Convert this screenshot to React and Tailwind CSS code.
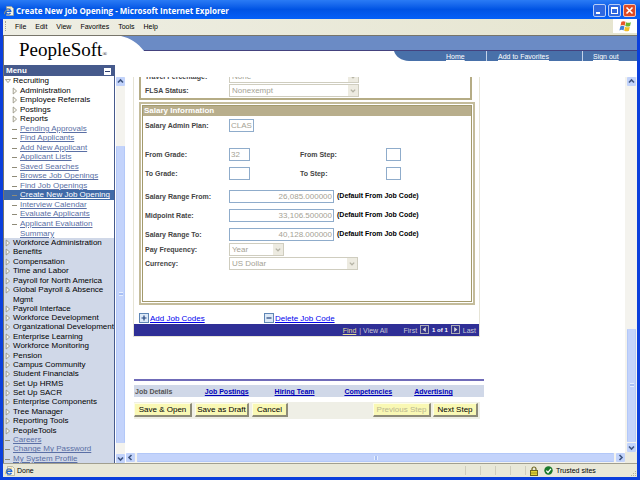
import { useState } from "react";

const recruitingFolders = ["Administration", "Employee Referrals", "Postings", "Reports"];

const recruitingLinks = [
  "Pending Approvals",
  "Find Applicants",
  "Add New Applicant",
  "Applicant Lists",
  "Saved Searches",
  "Browse Job Openings",
  "Find Job Openings",
  "Create New Job Opening",
  "Interview Calendar",
  "Evaluate Applicants",
  "Applicant Evaluation Summary",
];

const modules = [
  "Workforce Administration",
  "Benefits",
  "Compensation",
  "Time and Labor",
  "Payroll for North America",
  "Global Payroll & Absence Mgmt",
  "Payroll Interface",
  "Workforce Development",
  "Organizational Development",
  "Enterprise Learning",
  "Workforce Monitoring",
  "Pension",
  "Campus Community",
  "Student Financials",
  "Set Up HRMS",
  "Set Up SACR",
  "Enterprise Components",
  "Tree Manager",
  "Reporting Tools",
  "PeopleTools",
];

const accountLinks = ["Careers", "Change My Password", "My System Profile"];

const twoLine = ["Applicant Evaluation Summary", "Global Payroll & Absence Mgmt"];

const Chevron = ({ dir }) => {
  const paths = {
    up: "M2 5.5 L4.5 3 L7 5.5",
    down: "M2 3.5 L4.5 6 L7 3.5",
    left: "M5.5 2 L3 4.5 L5.5 7",
    right: "M3.5 2 L6 4.5 L3.5 7",
  };
  return (
    <svg viewBox="0 0 9 9" className="block w-[9px] h-[9px]" fill="none" stroke="#3f5580" strokeWidth="1.6">
      <path d={paths[dir]} />
    </svg>
  );
};

const ScrollButton = ({ dir }) => (
  <button
    aria-label={`Scroll ${dir}`}
    className="shrink-0 w-[9px] h-[9px] rounded-[1px] bg-[#c2d3fb]"
  >
    <Chevron dir={dir} />
  </button>
);

// before / thumb / after are shares of the track length
const VerticalScroll = ({ before, thumb, after }) => (
  <div className="w-[9px] shrink-0 flex flex-col bg-[#f4f3ee]">
    <ScrollButton dir="up" />
    <div style={{ flexGrow: before }} />
    <div
      className="rounded-[1px] border-x border-[#b3c8f8] bg-[#c3d3fb] flex flex-col items-center justify-center"
      style={{ flexGrow: thumb }}
    >
      <div className="w-[4px] h-[4px] border-y border-[#e6eefd] bg-[#a9c0f5]" />
    </div>
    <div style={{ flexGrow: after }} />
    <ScrollButton dir="down" />
  </div>
);

const Triangle = ({ open }) => (
  <svg viewBox="0 0 6 8" className="shrink-0 mt-px w-[6px] h-[8px]" fill="#fbfaf4" stroke="#8f8b78" strokeWidth="0.8">
    {open ? <path d="M0.4 2.5 H5.6 L3 5.6 Z" /> : <path d="M1.2 1 V7 L4.6 4 Z" />}
  </svg>
);

const Dash = () => <span className="shrink-0 mt-[5px] w-[5px] h-px bg-[#8f8b78]" />;

const MenuLine = ({ label, indent, kind, active, onClick }) => {
  const wraps = twoLine.includes(label);
  const rowSpan = wraps ? "row-span-2" : "row-span-1";
  const pad = indent ? "pl-[8px]" : "pl-px";
  const gap = kind === "link" ? "gap-[3px]" : "gap-[2px]";
  const bg = active ? "bg-[#3f6aa8]" : "";
  const color = active ? "text-white" : kind === "link" ? "text-[#5a6fa5]" : "text-black";
  return (
    <li className={`${rowSpan} ${pad} ${gap} ${bg} flex items-start min-h-0`}>
      {kind === "link" ? <Dash /> : <Triangle open={kind === "open"} />}
      <a
        href="#"
        onClick={onClick}
        className={`${color} ${kind === "link" ? "underline" : ""} ${wraps ? "w-[94px]" : "whitespace-nowrap"} leading-[10px]`}
      >
        {label}
      </a>
    </li>
  );
};

const Sidebar = () => {
  const [current, setCurrent] = useState("Create New Job Opening");
  return (
    <nav className="w-[111px] shrink-0 pt-[3px] flex flex-col">
      <div className="shrink-0 h-[11px] pt-px pl-[2px] pr-[4px] flex items-center justify-between bg-[#465a8c] text-white font-bold text-[8px] leading-none">
        Menu
        <button aria-label="Collapse menu" className="w-[7px] h-[7px] bg-white flex items-center justify-center">
          <span className="w-[5px] h-px bg-[#2d3f70]" />
        </button>
      </div>
      <ul className="shrink-0 h-[162px] grid auto-rows-[minmax(0,1fr)] bg-white border-r border-[#465a8c]">
        <MenuLine label="Recruiting" kind="open" />
        {recruitingFolders.map((label) => (
          <MenuLine key={label} label={label} kind="folder" indent />
        ))}
        {recruitingLinks.map((label) => (
          <MenuLine
            key={label}
            label={label}
            kind="link"
            indent
            active={label === current}
            onClick={() => setCurrent(label)}
          />
        ))}
      </ul>
      <ul className="flex-1 min-h-0 overflow-hidden grid auto-rows-[minmax(0,1fr)] bg-[#d0d8e8] border-r border-[#465a8c]">
        {modules.map((label) => (
          <MenuLine key={label} label={label} kind="folder" />
        ))}
        {accountLinks.map((label) => (
          <MenuLine key={label} label={label} kind="link" />
        ))}
      </ul>
    </nav>
  );
};

const labelClass = "text-[7px] leading-[13px] font-bold text-[#444444] whitespace-nowrap";

const FieldLabel = ({ id, children }) => (
  <label htmlFor={id} className={`${labelClass} w-[84px] shrink-0`}>
    {children}
  </label>
);

const TextField = ({ id, value, width, right }) => (
  <input
    id={id}
    type="text"
    defaultValue={value}
    className={`${width} ${right ? "text-right" : ""} h-[13px] px-px border border-[#8faccb] bg-white text-[8px] leading-[11px] text-[#a5a294]`}
  />
);

const SelectField = ({ id, value, width }) => (
  <div className={`${width} relative h-[13px]`}>
    <select
      id={id}
      disabled
      className="appearance-none w-full h-[13px] pl-[2px] border border-[#cfcdbf] bg-white text-[8px] leading-[11px] text-[#a5a294] opacity-100"
    >
      <option>{value}</option>
    </select>
    <span className="absolute right-px top-px w-[10px] h-[11px] bg-[#edebe1] pointer-events-none flex items-center justify-center">
      <svg viewBox="0 0 6 4" className="w-[6px] h-[4px]" fill="none" stroke="#b5b3a5" strokeWidth="1.3">
        <path d="M0.8 0.6 L3 2.8 L5.2 0.6" />
      </svg>
    </span>
  </div>
);

const SalaryRow = ({ id, label, value }) => (
  <div className="flex">
    <FieldLabel id={id}>{label}</FieldLabel>
    <TextField id={id} value={value} width="w-[105px]" right />
    <span className="ml-[3px] text-[7px] leading-[11px] font-bold text-black whitespace-nowrap">
      (Default From Job Code)
    </span>
  </div>
);

const GradeRow = ({ gradeId, gradeLabel, grade, stepId, stepLabel }) => (
  <div className="flex">
    <FieldLabel id={gradeId}>{gradeLabel}</FieldLabel>
    <div className="w-[71px]">
      <TextField id={gradeId} value={grade} width="w-[21px]" />
    </div>
    <div className="w-[86px]">
      <label htmlFor={stepId} className={labelClass}>
        {stepLabel}
      </label>
    </div>
    <TextField id={stepId} value="" width="w-[15px]" />
  </div>
);

const Plus = ({ minus }) => (
  <svg viewBox="0 0 10 10" className="w-[10px] h-[10px]">
    <rect x="0.5" y="0.5" width="9" height="9" fill="#dce9f7" stroke="#5f86b5" />
    <path d={minus ? "M2.5 5 H7.5" : "M2.5 5 H7.5 M5 2.5 V7.5"} stroke="#22427c" strokeWidth="1.2" />
  </svg>
);

const PageArrow = ({ prev }) => (
  <button aria-label={prev ? "Previous" : "Next"} className="mb-[2px] w-[9px] h-[9px]">
    <svg viewBox="0 0 9 9" className="block w-[9px] h-[9px]">
      <rect x="0.5" y="0.5" width="8" height="8" fill="#34348a" stroke="#a9a9b5" />
      <path d={prev ? "M5.8 2 V7 L2.6 4.5 Z" : "M3.2 2 V7 L6.4 4.5 Z"} fill="#d6d6dc" />
    </svg>
  </button>
);

const JobForm = () => (
  <section className="w-[347px] border-x border-b border-[#e6e4d6] bg-white">
    <div className="pl-[5px] pr-[4px]">
      <div className="-mt-[7px] mr-[3px] pl-[4px] pb-px flex flex-col gap-px border-x-2 border-b-2 border-[#b5ac85]">
        <div className="flex">
          <FieldLabel id="travel">Travel Percentage:</FieldLabel>
          <SelectField id="travel" value="None" width="w-[130px]" />
        </div>
        <div className="flex">
          <FieldLabel id="flsa">FLSA Status:</FieldLabel>
          <SelectField id="flsa" value="Nonexempt" width="w-[130px]" />
        </div>
      </div>

      {/* Salary group box */}
      <div className="mt-[2px] border-2 border-[#c4bc9b] p-px">
        <div className="border border-[#a39a6c]">
          <h2 className="h-[10px] pl-px bg-[#b8ae8c] text-white text-[8px] leading-[10px] font-bold">
            Salary Information
          </h2>
          <div className="pt-[3px] pb-[31px] pl-[2px]">
            <div className="flex">
              <FieldLabel id="plan">Salary Admin Plan:</FieldLabel>
              <TextField id="plan" value="CLAS" width="w-[25px]" />
            </div>
            <div className="mt-4 flex flex-col gap-[6px]">
              <GradeRow gradeId="fg" gradeLabel="From Grade:" grade="32" stepId="fs" stepLabel="From Step:" />
              <GradeRow gradeId="tg" gradeLabel="To Grade:" grade="" stepId="ts" stepLabel="To Step:" />
            </div>
            <div className="mt-[10px] flex flex-col gap-[6px]">
              <SalaryRow id="from" label="Salary Range From:" value="26,085.000000" />
              <SalaryRow id="mid" label="Midpoint Rate:" value="33,106.500000" />
              <SalaryRow id="to" label="Salary Range To:" value="40,128.000000" />
            </div>
            <div className="mt-[2px] flex flex-col gap-px">
              <div className="flex">
                <FieldLabel id="freq">Pay Frequency:</FieldLabel>
                <SelectField id="freq" value="Year" width="w-[55px]" />
              </div>
              <div className="flex">
                <FieldLabel id="cur">Currency:</FieldLabel>
                <SelectField id="cur" value="US Dollar" width="w-[129px]" />
              </div>
            </div>
          </div>
        </div>
      </div>

      <div className="mt-[6px] h-[13px] flex items-center text-[8px] leading-[9px] text-[#0000ee]">
        <a href="#" className="w-[125px] flex items-end">
          <Plus />
          <span className="ml-px underline">Add Job Codes</span>
        </a>
        <a href="#" className="flex items-end">
          <Plus minus />
          <span className="ml-px underline">Delete Job Code</span>
        </a>
      </div>
    </div>

    <div className="h-[12px] pr-[3px] flex items-center justify-end bg-[#2f2f96] text-[7px] leading-none text-[#c9c9d4] whitespace-nowrap">
      <a href="#" className="underline text-[#e4dc9a]">Find</a>
      <span className="ml-[3px] mr-[16px]">| View All</span>
      <span>First</span>
      <span className="ml-[3px] flex">
        <PageArrow prev />
      </span>
      <span className="mx-[3px] text-[6px] font-bold text-white">1 of 1</span>
      <PageArrow />
      <span className="ml-[3px]">Last</span>
    </div>
  </section>
);

const FormButton = ({ children, width, disabled }) => (
  <button
    disabled={disabled}
    className={`${width} ${disabled ? "text-[#b9b78f]" : "text-black"} h-[14px] bg-[#f9f8b4] border-t border-l border-r-2 border-b-2 border-t-[#fdfde6] border-l-[#fdfde6] border-r-[#8d8b78] border-b-[#8d8b78] text-[8px] leading-[10px] whitespace-nowrap`}
  >
    {children}
  </button>
);

const FormFooter = () => (
  <footer className="mt-[42px] ml-px w-[350px]">
    <div className="h-[2px] bg-[#6f6bb8]" />
    <div className="mt-[4px] h-[12px] pl-px flex bg-[#d0d8e8] text-[7px] leading-[14px] font-bold">
      <span className="w-[70px] text-[#555555]">Job Details</span>
      {["Job Postings", "Hiring Team", "Competencies", "Advertising"].map((tab) => (
        <a key={tab} href="#" className="w-[70px] underline text-[#0000b8]">
          {tab}
        </a>
      ))}
    </div>
    <div className="mt-[5px] h-[17px] mr-[4px] pr-[2px] pt-px flex items-start bg-[#efefe6]">
      <div className="flex-1 flex gap-[3px]">
        <FormButton width="w-[58px]">Save & Open</FormButton>
        <FormButton width="w-[54px]">Save as Draft</FormButton>
        <FormButton width="w-[36px]">Cancel</FormButton>
      </div>
      <div className="flex gap-[2px]">
        <FormButton width="w-[58px]" disabled>Previous Step</FormButton>
        <FormButton width="w-[45px]">Next Step</FormButton>
      </div>
    </div>
  </footer>
);

const BrowserIcon = () => (
  <svg viewBox="0 0 10 10" className="shrink-0 w-[10px] h-[10px]">
    <path d="M2.5 0.5 H7.5 L9.5 2.5 V9.5 H2.5 Z" fill="#f7f4e2" stroke="#9c9884" strokeWidth="0.6" />
    <path d="M6.4 6.8 A2.6 2.6 0 1 1 6.7 5.2 H2" fill="none" stroke="#1c62d6" strokeWidth="1.4" />
    <path d="M0.6 8.2 C0 5.5 3.5 2.4 7.2 2" fill="none" stroke="#e2b03a" strokeWidth="0.7" />
  </svg>
);

const TitleBar = () => (
  <div className="h-[19px] shrink-0 pl-[4px] pr-[4px] pt-[2px] flex items-center bg-linear-to-b from-[#2a7bf5] via-[#0053e4] to-[#0560f8]">
    <BrowserIcon />
    <h1 className="flex-1 ml-[2px] text-white font-bold text-[8px] leading-none font-['Open_Sans',sans-serif]">
      Create New Job Opening - Microsoft Internet Explorer
    </h1>
    <div className="flex gap-[2px]">
      <button aria-label="Minimize" className="w-[13px] h-[13px] rounded-[2px] border border-[#b7cdf7] bg-[#2f68e0]">
        <svg viewBox="0 0 11 11" className="block w-full h-full"><rect x="2" y="7" width="4" height="2" fill="#fff" /></svg>
      </button>
      <button aria-label="Maximize" className="w-[13px] h-[13px] rounded-[2px] border border-[#b7cdf7] bg-[#2f68e0]">
        <svg viewBox="0 0 11 11" className="block w-full h-full">
          <rect x="2.5" y="2.5" width="6" height="6" fill="none" stroke="#fff" />
          <rect x="2" y="2" width="7" height="2" fill="#fff" />
        </svg>
      </button>
      <button aria-label="Close" className="w-[13px] h-[13px] rounded-[2px] border border-[#f0c4b8] bg-[#dd4a25]">
        <svg viewBox="0 0 11 11" className="block w-full h-full"><path d="M2.5 2.5 L8.5 8.5 M8.5 2.5 L2.5 8.5" stroke="#fff" strokeWidth="1.6" /></svg>
      </button>
    </div>
  </div>
);

const WindowsFlag = () => (
  <svg viewBox="0 0 12 12" className="w-[13px] h-[13px]">
    <path d="M2.2 1.6 C3.6 0.8 4.8 1 6 1.7 L5.2 5.2 C4 4.6 2.8 4.5 1.4 5.2 Z" fill="#e8572a" />
    <path d="M6.6 2 C8 2.8 9.4 2.8 11 2 L10.2 5.6 C8.6 6.3 7.2 6.2 5.8 5.5 Z" fill="#6cb52d" />
    <path d="M1.2 5.9 C2.6 5.2 3.8 5.3 5 5.9 L4.2 9.6 C3 8.9 1.8 8.8 0.4 9.6 Z" fill="#3f7fd8" />
    <path d="M5.6 6.2 C7 6.9 8.4 7 10 6.3 L9.2 10 C7.6 10.7 6.2 10.6 4.8 9.9 Z" fill="#f3bd25" />
  </svg>
);

const MenuBar = () => (
  <div className="h-[17px] shrink-0 pb-[2px] flex bg-linear-to-r from-[#eeeee4] to-[#e6e5cf] border-b border-[#77756a] text-[7px] leading-none text-black">
    <div className="my-[2px] ml-[2px] w-px border-l border-dotted border-[#a5a393]" />
    <div className="flex-1 pl-[9px] flex items-center gap-[9px]">
      {["File", "Edit", "View", "Favorites", "Tools", "Help"].map((item) => (
        <button key={item}>{item}</button>
      ))}
    </div>
    <div className="w-[24px] flex items-center justify-center bg-white">
      <WindowsFlag />
    </div>
  </div>
);

const Banner = () => (
  <header className="h-[26px] shrink-0 flex bg-white">
    <div className="w-[117px] shrink-0 pl-[15px] flex items-center font-['Liberation_Serif',serif] text-[19px] leading-none text-black">
      PeopleSoft
      <span className="self-end mb-[5px] text-[6px] leading-none">®</span>
    </div>
    <div className="flex-1 flex flex-col">
      <div className="h-[15px] flex">
        <svg viewBox="0 0 23 15" className="w-[23px] h-[15px]">
          <path d="M0 0 H23 V15 C17 7 9 2 0 0 Z" fill="#6b8bc5" />
        </svg>
        <div className="flex-1 bg-[#6b8bc5] border-b border-[#44427e]" />
      </div>
      <div className="h-[10px] flex justify-end">
        <svg viewBox="0 0 15 10" className="w-[15px] h-[10px]">
          <path d="M0 0 H15 V10 C7 9.5 2 6 0 0 Z" fill="#4870a9" />
        </svg>
        <div className="w-[228px] flex bg-[#4870a9] text-[7px] leading-[11px] text-white">
          <a href="#" className="w-[77px] pl-[37px] underline">Home</a>
          <a href="#" className="w-[96px] pl-[11px] border-l border-[#c4d2e8] underline">Add to Favorites</a>
          <a href="#" className="flex-1 pl-[10px] border-l border-[#c4d2e8] underline">Sign out</a>
        </div>
      </div>
    </div>
  </header>
);

const StatusBar = () => (
  <div className="h-[14px] shrink-0 pl-[2px] flex items-center bg-[#e9e8d8] border-t border-[#a19f8f] text-[7px] leading-none text-black">
    <BrowserIcon />
    <span className="flex-1 ml-[2px]">Done</span>
    <div className="flex self-stretch py-[2px]">
      {[1, 2, 3, 4].map((pane) => (
        <span key={pane} className="w-[15px] border-l border-[#cfcdbd]" />
      ))}
      <span className="w-[5px] border-l border-[#cfcdbd]" />
    </div>
    <svg viewBox="0 0 8 10" className="w-[8px] h-[10px]">
      <path d="M2 5 V3 A2 2 0 0 1 6 3 V5" fill="none" stroke="#6d6420" strokeWidth="1.2" />
      <rect x="0.5" y="4.5" width="7" height="5" fill="#e3d437" stroke="#6d6420" />
      <path d="M1 7 H7" stroke="#8d8226" strokeWidth="0.8" />
    </svg>
    <svg viewBox="0 0 9 9" className="ml-[6px] w-[9px] h-[9px]">
      <circle cx="4.5" cy="4.5" r="4.2" fill="#1b7a2c" />
      <path d="M2.3 4.6 L4 6.4 L6.9 2.8" fill="none" stroke="#fff" strokeWidth="1.3" />
    </svg>
    <span className="ml-[3px] w-[74px]">Trusted sites</span>
    <svg viewBox="0 0 7 7" className="self-end w-[7px] h-[7px]" fill="#b3b1a0">
      <path d="M5 1h1v1h-1z M5 3h1v1h-1z M5 5h1v1h-1z M3 3h1v1h-1z M3 5h1v1h-1z M1 5h1v1h-1z" />
    </svg>
  </div>
);

export default function App() {
  return (
    <div className="h-screen flex flex-col overflow-hidden bg-[#0a3fe0] font-['Liberation_Sans',Arial,sans-serif]">
      <TitleBar />
      <div className="flex-1 min-h-0 flex flex-col border-x-3 border-b-3 border-[#0b3fdc]">
        <MenuBar />
        <div className="flex-1 min-h-0 flex flex-col border-l border-[#77756a] bg-white">
          <Banner />
          <div className="flex-1 min-h-0 flex text-[8px] leading-[9px]">
            <Sidebar />
            <div className="pt-[15px] pl-px flex">
              <VerticalScroll before={60} thumb={295} after={11} />
            </div>
            <main className="flex-1 min-w-0 pt-[15px] flex border-l border-white">
              <div className="flex-1 min-w-0 flex flex-col">
                <div className="flex-1 min-h-0 pl-[7px] overflow-hidden">
                  <JobForm />
                  <FormFooter />
                </div>
                <div className="h-[10px] shrink-0 flex items-start bg-[#f4f3ee]">
                  <ScrollButton dir="left" />
                  <div className="flex-1 mx-[2px] h-[9px] rounded-[1px] border-y border-[#b3c8f8] bg-[#c3d3fb] flex items-center justify-center">
                    <div className="w-[4px] h-[4px] border-x border-[#e6eefd] bg-[#a9c0f5]" />
                  </div>
                  <ScrollButton dir="right" />
                </div>
              </div>
              <div className="flex flex-col">
                <div className="flex-1 pl-[2px] pr-px flex bg-[#f4f3ee]">
                  <VerticalScroll before={244} thumb={110} after={1} />
                </div>
                <div className="h-[11px] bg-[#ecebe0]" />
              </div>
            </main>
          </div>
        </div>
        <StatusBar />
      </div>
    </div>
  );
}
